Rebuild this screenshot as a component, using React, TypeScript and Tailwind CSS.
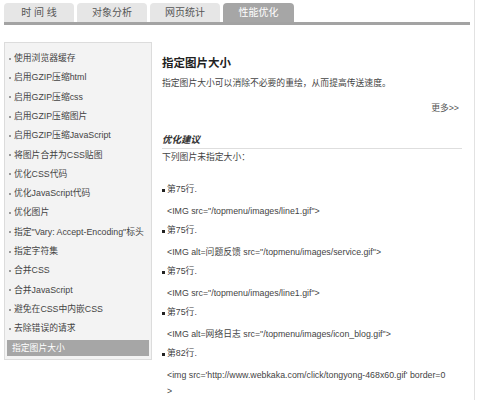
const tabs = ["时 间 线", "对象分析", "网页统计", "性能优化"];

const menu = [
  "使用浏览器缓存",
  "启用GZIP压缩html",
  "启用GZIP压缩css",
  "启用GZIP压缩图片",
  "启用GZIP压缩JavaScript",
  "将图片合并为CSS贴图",
  "优化CSS代码",
  "优化JavaScript代码",
  "优化图片",
  "指定\"Vary: Accept-Encoding\"标头",
  "指定字符集",
  "合并CSS",
  "合并JavaScript",
  "避免在CSS中内嵌CSS",
  "去除错误的请求",
];

const issues = [
  { line: "第75行.", code: '<IMG src="/topmenu/images/line1.gif">' },
  { line: "第75行.", code: '<IMG alt=问题反馈 src="/topmenu/images/service.gif">' },
  { line: "第75行.", code: '<IMG src="/topmenu/images/line1.gif">' },
  { line: "第75行.", code: '<IMG alt=网络日志 src="/topmenu/images/icon_blog.gif">' },
  { line: "第82行.", code: "<img src='http://www.webkaka.com/click/tongyong-468x60.gif' border=0\n>" },
];

export default function App() {
  return (
    <div
      className="w-[480px] h-[401px] overflow-hidden bg-white text-[8.8px] text-[#444]"
      style={{ fontFamily: '"Liberation Sans", "Noto Sans CJK SC", sans-serif' }}
    >
      {/* Tabs */}
      <div className="pl-[4px] pt-[3px]">
        <div className="flex gap-[3px]">
          {tabs.map((t, i) => (
            <div
              key={t}
              className={
                i === 3
                  ? "w-[71px] h-[19px] rounded-t-[4px] bg-[#a6a6a6] text-white flex items-center justify-center text-[10px]"
                  : "w-[70px] h-[19px] rounded-t-[4px] bg-[#e6e6e6] text-[#555] flex items-center justify-center text-[10px]"
              }
            >
              {t}
            </div>
          ))}
        </div>
        <div className="h-[3px] bg-[#a3a3a3] w-[466px]" />
      </div>

      <div className="flex pl-[4px] pt-[17px]">
        {/* Sidebar */}
        <div className="w-[148px] h-[318px] bg-[#f3f3f3] border border-[#dcdcdc] px-[2px] pt-[6px]">
          {menu.map((m) => (
            <div key={m} className="h-[19.3px] flex items-center pl-[2px] whitespace-nowrap">
              <span className="w-[2px] h-[2px] bg-[#999] mr-[3px]" />
              {m}
            </div>
          ))}
          <div className="mt-[2px] h-[16px] bg-[#a6a6a6] text-white flex items-center pl-[5px]">
            指定图片大小
          </div>
        </div>

        {/* Content */}
        <div className="w-[323px] h-[400px] -mt-[42px] pt-[42px] border-r border-[#e2e2e2]">
          <div className="pl-[10px] pr-[6px] pt-[13px]">
            <h2 className="h-[16px] leading-[16px] text-[11.5px] font-bold text-[#222]">指定图片大小</h2>
            <p className="mt-[5px] h-[14px] leading-[14px]">指定图片大小可以消除不必要的重绘，从而提高传送速度。</p>
            <div className="mt-[11px] h-[14px] leading-[14px] text-right text-[#555] pr-[9px]">更多&gt;&gt;</div>
            <div className="mt-[18px] border-b border-[#dedede] pb-[1px] mr-[6px]">
              <div className="h-[14px] leading-[14px] italic font-bold text-[9.5px] text-[#333]">优化建议</div>
            </div>
            <p className="h-[14px] leading-[14px] mt-[1px]">下列图片未指定大小：</p>
            <div className="mt-[16px]">
              {issues.map((it, i) => (
                <div key={i} className="mb-[2px]">
                  <div className="h-[20px] flex items-center">
                    <span className="w-[3px] h-[3px] bg-[#222] mr-[2px]" />
                    {it.line}
                  </div>
                  <div className="mt-[3px] pl-[5px] leading-[16px] whitespace-pre-line">{it.code}</div>
                </div>
              ))}
            </div>
          </div>
        </div>
      </div>
    </div>
  );
}
